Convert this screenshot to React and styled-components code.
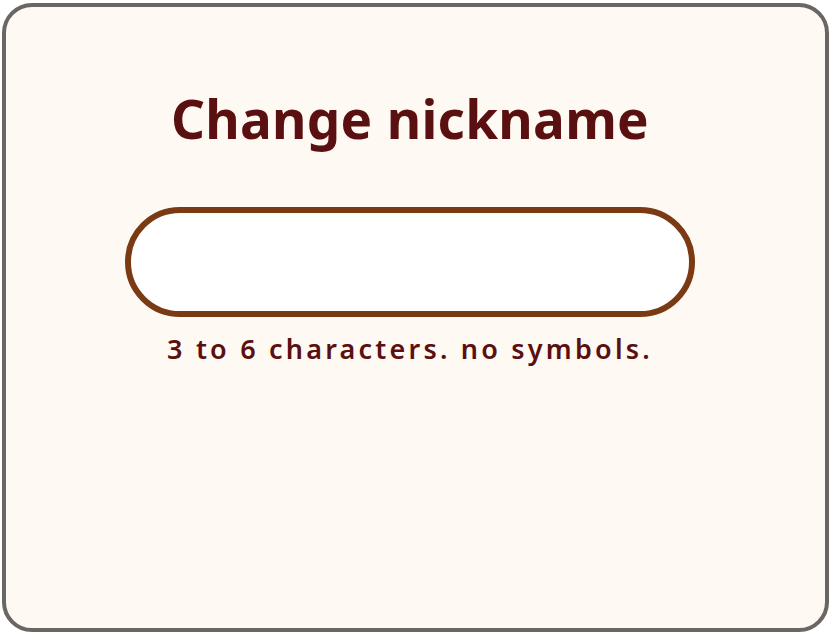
import React from "react";
import styled, { createGlobalStyle } from "styled-components";

const GlobalStyle = createGlobalStyle`
  html, body {
    margin: 0;
    padding: 0;
    background: #ffffff;
  }
  body {
    font-family: "Noto Sans", "Open Sans", sans-serif;
  }
`;

const Page = styled.div`
  width: 831px;
  height: 634px;
  padding: 3px 2px 2px 2px;
  box-sizing: border-box;
`;

const Card = styled.div`
  height: 100%;
  box-sizing: border-box;
  background: #fff9f3;
  border: 4px solid #6b6661;
  border-radius: 30px;
  display: flex;
  flex-direction: column;
  align-items: center;
  padding: 85px 11px 0 0;
`;

const Title = styled.h1`
  margin: 0;
  color: #5a1010;
  font-family: "Noto Sans", sans-serif;
  font-size: 53px;
  font-weight: 700;
  line-height: 1;
  letter-spacing: 0.3px;
`;

const NameInput = styled.input`
  margin-top: 62px;
  width: 570px;
  height: 110px;
  box-sizing: border-box;
  border: 6px solid #7a3a13;
  border-radius: 55px;
  background: #ffffff;
  outline: none;
  padding: 0 40px;
  font-size: 32px;
  color: #5a1010;
  text-align: center;
`;

const Hint = styled.p`
  margin: 16px 0 0 0;
  color: #5a1010;
  font-family: "Noto Sans", sans-serif;
  font-size: 27px;
  font-weight: 600;
  letter-spacing: 3.2px;
  line-height: 1.2;
`;

export default function App() {
  return (
    <Page>
      <GlobalStyle />
      <Card>
        <Title>Change nickname</Title>
        <NameInput type="text" />
        <Hint>3 to 6 characters. no symbols.</Hint>
      </Card>
    </Page>
  );
}
